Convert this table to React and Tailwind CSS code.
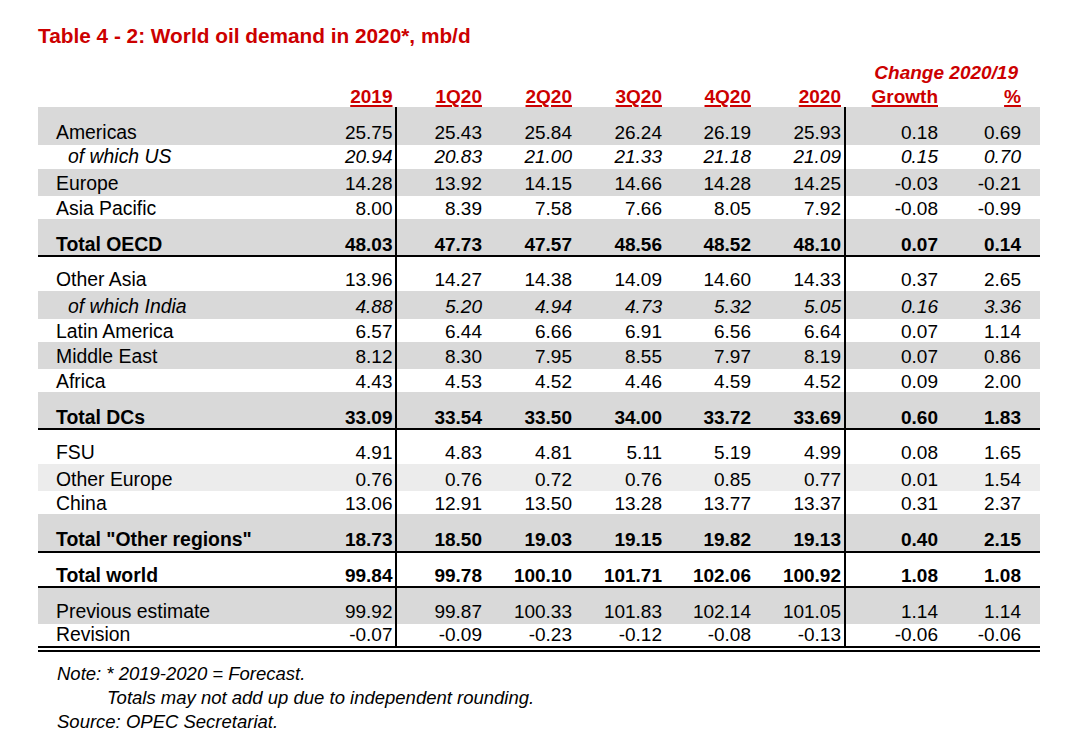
import React from 'react';

const GRAY = 'bg-[#d9d9d9]';
const LIGHT = 'bg-[#ececec]';

// column template shared by header and body rows
const COLS = 'grid grid-cols-[267px_92px_85px_90px_90px_89px_95px_92px_83px_19px]';

const rows = [
  { label: 'Americas', v: ['25.75', '25.43', '25.84', '26.24', '26.19', '25.93', '0.18', '0.69'], bg: GRAY, h: 'h-[38px]', pb: 'pb-[3px]' },
  { label: 'of which US', v: ['20.94', '20.83', '21.00', '21.33', '21.18', '21.09', '0.15', '0.70'], sub: true, h: 'h-[24px]', pb: 'pb-[3px]' },
  { label: 'Europe', v: ['14.28', '13.92', '14.15', '14.66', '14.28', '14.25', '-0.03', '-0.21'], bg: GRAY, h: 'h-[27px]', pb: 'pb-[3px]' },
  { label: 'Asia Pacific', v: ['8.00', '8.39', '7.58', '7.66', '8.05', '7.92', '-0.08', '-0.99'], h: 'h-[23px]', pb: 'pb-[1px]' },
  { label: 'Total OECD', v: ['48.03', '47.73', '47.57', '48.56', '48.52', '48.10', '0.07', '0.14'], bg: GRAY, total: true, line: true, h: 'h-[38px]', pb: 'pb-[1.5px]' },
  { label: 'Other Asia', v: ['13.96', '14.27', '14.38', '14.09', '14.60', '14.33', '0.37', '2.65'], h: 'h-[34px]', pb: 'pb-[2.5px]' },
  { label: 'of which India', v: ['4.88', '5.20', '4.94', '4.73', '5.32', '5.05', '0.16', '3.36'], sub: true, bg: GRAY, h: 'h-[28px]', pb: 'pb-[3.5px]' },
  { label: 'Latin America', v: ['6.57', '6.44', '6.66', '6.91', '6.56', '6.64', '0.07', '1.14'], h: 'h-[23px]', pb: 'pb-[1px]' },
  { label: 'Middle East', v: ['8.12', '8.30', '7.95', '8.55', '7.97', '8.19', '0.07', '0.86'], bg: GRAY, h: 'h-[27px]', pb: 'pb-[3px]' },
  { label: 'Africa', v: ['4.43', '4.53', '4.52', '4.46', '4.59', '4.52', '0.09', '2.00'], h: 'h-[23px]', pb: 'pb-[1px]' },
  { label: 'Total DCs', v: ['33.09', '33.54', '33.50', '34.00', '33.72', '33.69', '0.60', '1.83'], bg: GRAY, total: true, line: true, h: 'h-[38px]', pb: 'pb-[1px]' },
  { label: 'FSU', v: ['4.91', '4.83', '4.81', '5.11', '5.19', '4.99', '0.08', '1.65'], h: 'h-[34px]', pb: 'pb-[2px]' },
  { label: 'Other Europe', v: ['0.76', '0.76', '0.72', '0.76', '0.85', '0.77', '0.01', '1.54'], bg: LIGHT, h: 'h-[27px]', pb: 'pb-[2px]' },
  { label: 'China', v: ['13.06', '12.91', '13.50', '13.28', '13.77', '13.37', '0.31', '2.37'], h: 'h-[23px]', pb: 'pb-[1px]' },
  { label: 'Total "Other regions"', v: ['18.73', '18.50', '19.03', '19.15', '19.82', '19.13', '0.40', '2.15'], bg: GRAY, total: true, line: true, h: 'h-[39px]', pb: 'pb-[2px]' },
  { label: 'Total world', v: ['99.84', '99.78', '100.10', '101.71', '102.06', '100.92', '1.08', '1.08'], total: true, line: true, h: 'h-[35px]', pb: 'pb-[1px]' },
  { label: 'Previous estimate', v: ['99.92', '99.87', '100.33', '101.83', '102.14', '101.05', '1.14', '1.14'], bg: GRAY, h: 'h-[36px]', pb: 'pb-[3.5px]' },
  { label: 'Revision', v: ['-0.07', '-0.09', '-0.23', '-0.12', '-0.08', '-0.13', '-0.06', '-0.06'], h: 'h-[22px]', pb: 'pb-[2.5px]' },
];

const headers = ['2019', '1Q20', '2Q20', '3Q20', '4Q20', '2020', 'Growth', '%'];

function Row({ r }) {
  const font = r.total ? 'font-bold' : r.sub ? 'italic' : '';
  return (
    <div
      className={`${COLS} ${r.h} ${r.bg || 'bg-white'} ${r.line ? 'border-b-2 border-black' : ''} ${font} items-end text-[19px] leading-[19px] text-black`}
    >
      <div className={`${r.pb} ${r.sub ? 'pl-[30px]' : 'pl-[18px]'} text-[19.4px] whitespace-nowrap`}>{r.label}</div>
      {r.v.map((x, i) => (
        <div
          key={i}
          className={`h-full flex items-end justify-end whitespace-nowrap ${r.pb} ${
            i === 0 ? 'border-r-2 border-black pr-[2.5px]' : i === 5 ? 'border-r-2 border-black pr-[3px]' : ''
          }`}
        >
          {x}
        </div>
      ))}
      <div />
    </div>
  );
}

export default function App() {
  return (
    <div className="min-h-screen bg-white font-['Liberation_Sans',Arial,sans-serif] text-black">
      <div className="pl-[38px]">
        <h1 className="mt-[24px] h-[24px] text-[20.8px] leading-[24px] font-bold text-[#cc0000]">
          Table 4 - 2: World oil demand in 2020*, mb/d
        </h1>

        <div className="w-[1002px]">
          {/* change caption */}
          <div className={`${COLS} mt-[15px] h-[19px] text-[19px] leading-[19px]`}>
            <div className="col-start-8 col-span-2 pr-[3px] text-right font-bold italic text-[#cc0000] whitespace-nowrap">
              Change 2020/19
            </div>
          </div>

          {/* column headers */}
          <div className={`${COLS} mt-[5px] h-[20px] text-[19px] leading-[19px] font-bold text-[#cc0000]`}>
            <div />
            {headers.map((hd, i) => (
              <div
                key={hd}
                className={`text-right whitespace-nowrap ${i === 0 ? 'pr-[4.5px]' : i === 5 ? 'pr-[5px]' : ''}`}
              >
                <span className="underline decoration-2 underline-offset-[2px]">{hd}</span>
              </div>
            ))}
          </div>

          {rows.map((r) => (
            <Row key={r.label} r={r} />
          ))}
          <div className="h-[6px] border-y-2 border-black" />
        </div>

        <div className="mt-[10px] pl-[19px] text-[18.5px] leading-[24px] italic text-black">
          <p>Note: * 2019-2020 = Forecast.</p>
          <p className="pl-[50px]">Totals may not add up due to independent rounding.</p>
          <p>Source: OPEC Secretariat.</p>
        </div>
      </div>
    </div>
  );
}
